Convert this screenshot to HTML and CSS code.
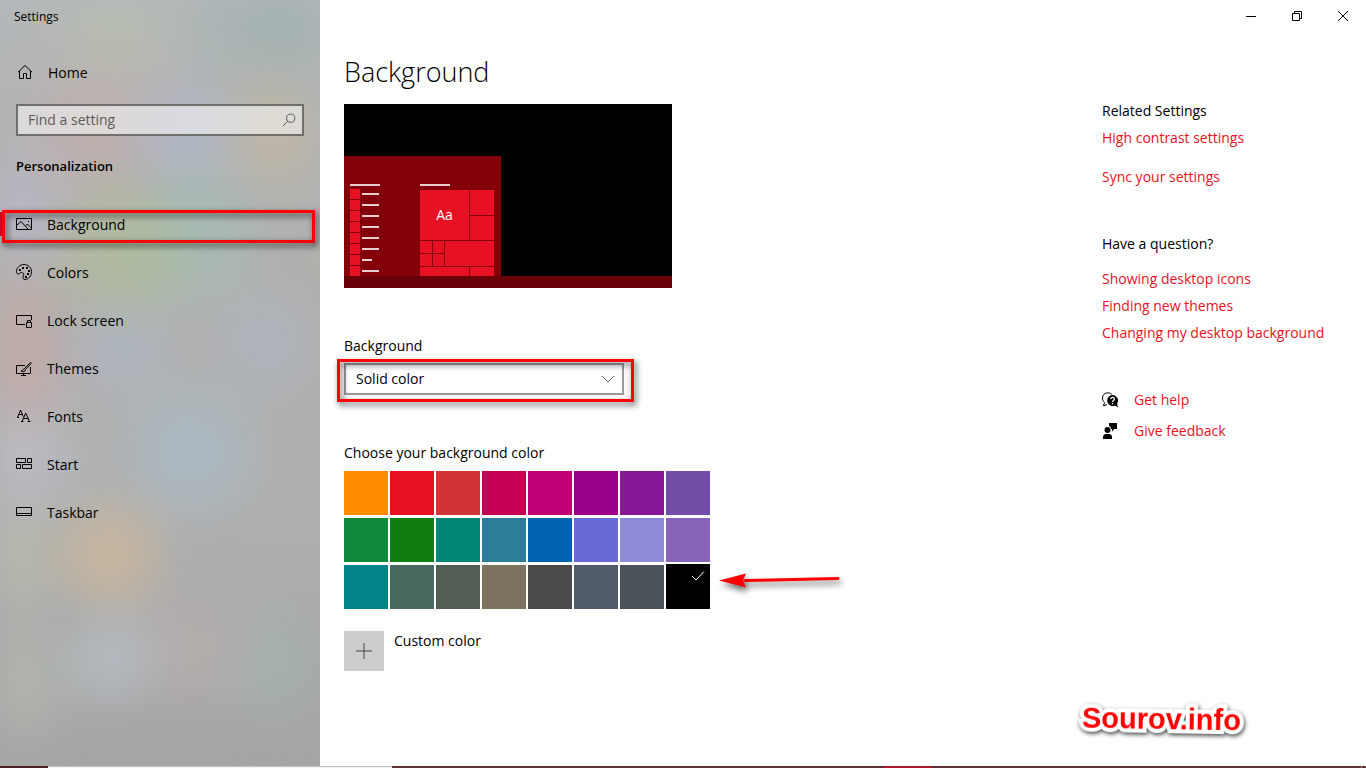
FILE: index.html
```html
<!DOCTYPE html>
<html lang="en">
<head>
    <meta charset="UTF-8">
    <meta name="viewport" content="width=device-width, initial-scale=1.0">
    <title>Settings</title>
    <link rel="stylesheet" href="styles.css">
</head>
<body>

    <div class="window">

        <!-- Sidebar -->
        <aside class="sidebar">
            <div class="app-name">Settings</div>

            <a class="nav-link home" href="#">
                <svg class="icon" viewBox="0 0 16 16"><path d="M1 8.2 8 1.5l7 6.7M2.5 7v7.5h4v-5h3v5h4V7"/></svg>
                <span>Home</span>
            </a>

            <div class="search">
                <input type="text" placeholder="Find a setting" aria-label="Find a setting">
                <svg class="search-icon" viewBox="0 0 14 14"><circle cx="8.7" cy="5.2" r="4.1"/><path d="M5.7 8.2 1 13"/></svg>
            </div>

            <h2 class="section-name">Personalization</h2>

            <nav class="nav">
                <a class="nav-link active" href="#">
                    <svg class="icon" viewBox="0 0 16 16"><path d="M.5 2.5h15v11H.5zM.5 9.5 5 5.5l7.5 8M9.5 10l2-2 4 4"/><path class="fill" d="M12 5h1v1h-1z"/></svg>
                    <span>Background</span>
                    <i class="callout"></i>
                </a>
                <a class="nav-link" href="#">
                    <svg class="icon" viewBox="0 0 16 16"><path d="M.5 7.5C.5 3.5 4 .5 8 .5s7.500 3 7.500 7c0 4.500-3 8-6.500 8-1.500 0-2-1-2-2.200 0-1.200.7-1.800.7-2.800s-1-2-2.200-2C4 8.500 3.500 10 2.200 10 1 10 .5 8.700.5 7.500z"/><path class="fill" d="M3 5h2v2H3zM6 3h2v2H6zM10 3h2v2h-2zM12 6h2v2h-2zM11 9h2v2h-2zM9 12h2v2H9z"/></svg>
                    <span>Colors</span>
                </a>
                <a class="nav-link" href="#">
                    <svg class="icon" viewBox="0 0 16 16"><path d="M9 12.500H.5v-9h15V8M10.500 10.500h5v5h-5zM11.500 10.500V8.500h3v2"/></svg>
                    <span>Lock screen</span>
                </a>
                <a class="nav-link" href="#">
                    <svg class="icon" viewBox="0 0 16 16"><path d="M9 5.500H.5v8h14V7M7.500 13.500v2M5 15.500h5M14.700 2.300 8.500 8.500l1 1 5.700-6.200zM8.500 8.700c-2 0-1.500 2-3.500 2.500 2 1 4.500.5 4.500-1.700"/></svg>
                    <span>Themes</span>
                </a>
                <a class="nav-link" href="#">
                    <svg class="icon" viewBox="0 0 16 16"><path d="M1.500 9.500 4.500 2l2.700 6.500M2.500 6.500h3.500M1 9.500h2M6 13.500 9.700 5l3.800 8.500M7.200 10.500h5M5 13.500h2.500M11.500 13.500h3"/></svg>
                    <span>Fonts</span>
                </a>
                <a class="nav-link" href="#">
                    <svg class="icon" viewBox="0 0 16 16"><path d="M.5 2.500h9v4h-9zM11.500 2.500h4v4h-4zM.5 8.500h4v4h-4zM6.500 8.500h9v4h-9z"/></svg>
                    <span>Start</span>
                </a>
                <a class="nav-link" href="#">
                    <svg class="icon" viewBox="0 0 16 16"><path d="M.5 3.500h15v8H.5zM.5 9.500h15"/></svg>
                    <span>Taskbar</span>
                </a>
            </nav>
        </aside>

        <!-- Main area -->
        <div class="main">
            <header class="titlebar">
                <button type="button" aria-label="Minimize"><svg viewBox="0 0 12 12"><path d="M1 6.500h10"/></svg></button>
                <button type="button" aria-label="Restore"><svg viewBox="0 0 12 12"><path d="M1.500 3.500h7v7h-7zM3.500 3.500v-2h7v7h-2"/></svg></button>
                <button type="button" aria-label="Close"><svg viewBox="0 0 12 12"><path d="M1 1l10 10M11 1 1 11"/></svg></button>
            </header>

            <div class="columns">
                <main class="content">
                    <h1>Background</h1>

                    <!-- Desktop preview -->
                    <div class="preview">
                        <div class="start-menu">
                            <ul class="app-list">
                                <li></li><li></li><li></li><li></li>
                                <li></li><li></li><li class="short"></li><li></li>
                            </ul>
                            <div class="tiles">
                                <div class="tile large">Aa</div>
                                <div class="tile medium"></div>
                                <div class="tile medium"></div>
                                <div class="small-tiles">
                                    <div class="tile"></div><div class="tile"></div>
                                    <div class="tile"></div><div class="tile"></div>
                                </div>
                                <div class="tile wide"></div>
                                <div class="tile bottom"></div>
                                <div class="tile"></div>
                            </div>
                        </div>
                        <div class="preview-taskbar"></div>
                    </div>

                    <label class="field-label" for="bgType">Background</label>
                    <div class="select-box">
                        <select id="bgType">
                            <option>Picture</option>
                            <option selected>Solid color</option>
                            <option>Slideshow</option>
                        </select>
                        <svg class="chevron" viewBox="0 0 14 8"><path d="M1 1l6 6 6-6"/></svg>
                        <i class="callout"></i>
                    </div>

                    <div class="field-label" id="colorLabel">Choose your background color</div>
                    <div class="swatches" role="radiogroup" aria-labelledby="colorLabel">
                        <input type="radio" name="color" class="orange" aria-label="Orange">
                        <input type="radio" name="color" class="red" aria-label="Red">
                        <input type="radio" name="color" class="brick" aria-label="Brick red">
                        <input type="radio" name="color" class="rose" aria-label="Rose">
                        <input type="radio" name="color" class="plum" aria-label="Plum">
                        <input type="radio" name="color" class="magenta" aria-label="Magenta">
                        <input type="radio" name="color" class="violet" aria-label="Violet">
                        <input type="radio" name="color" class="iris" aria-label="Iris">
                        <input type="radio" name="color" class="mint" aria-label="Mint green">
                        <input type="radio" name="color" class="green" aria-label="Green">
                        <input type="radio" name="color" class="sea" aria-label="Seafoam">
                        <input type="radio" name="color" class="steel" aria-label="Steel">
                        <input type="radio" name="color" class="blue" aria-label="Blue">
                        <input type="radio" name="color" class="purple" aria-label="Purple">
                        <input type="radio" name="color" class="lilac" aria-label="Lilac">
                        <input type="radio" name="color" class="orchid" aria-label="Orchid">
                        <input type="radio" name="color" class="teal" aria-label="Teal">
                        <input type="radio" name="color" class="moss" aria-label="Moss">
                        <input type="radio" name="color" class="sage" aria-label="Sage">
                        <input type="radio" name="color" class="camo" aria-label="Camouflage">
                        <input type="radio" name="color" class="storm" aria-label="Storm">
                        <input type="radio" name="color" class="slate" aria-label="Slate">
                        <input type="radio" name="color" class="dusk" aria-label="Dusk">
                        <input type="radio" name="color" class="black" aria-label="Black" checked>
                        <svg class="check" viewBox="0 0 14 12"><path d="M1 6l4 4 8-8.500"/></svg>
                        <svg class="arrow" viewBox="0 0 130 30"><path d="M26 15.500 119 13.500" stroke="#f00" stroke-width="3" stroke-linecap="round"/><path d="M0 15.500 27 8.500l-3 7 3 7z" fill="#f00"/></svg>
                    </div>

                    <div class="custom">
                        <button type="button" id="customColor" aria-label="Add custom color"><svg viewBox="0 0 16 16"><path d="M8 0v16M0 8h16"/></svg></button>
                        <label for="customColor">Custom color</label>
                    </div>
                </main>

                <!-- Related links -->
                <aside class="related">
                    <h3>Related Settings</h3>
                    <ul class="spaced">
                        <li><a href="#">High contrast settings</a></li>
                        <li><a href="#">Sync your settings</a></li>
                    </ul>

                    <h3>Have a question?</h3>
                    <ul class="questions">
                        <li><a href="#">Showing desktop icons</a></li>
                        <li><a href="#">Finding new themes</a></li>
                        <li><a href="#">Changing my desktop background</a></li>
                    </ul>

                    <ul class="support">
                        <li>
                            <svg viewBox="0 0 16 16"><path d="M5 12.500 1.500 14l1-3.500C.7 9 .5 7.500.5 6c0-3 2.300-5.200 5.200-5.200 2 0 3.500.8 4.500 2" fill="none" stroke="#000"/><path d="M10.500 3a5.500 5.500 0 1 0 2.600 10.400L16 15.500l-.9-4A5.500 5.500 0 0 0 10.500 3z"/><path d="M8.700 7c0-2.200 3.700-2.200 3.700 0 0 1.300-1.800 1.400-1.800 3M10.600 11v1.300" fill="none" stroke="#fff" stroke-width="1.200"/></svg>
                            <a href="#">Get help</a>
                        </li>
                        <li>
                            <svg viewBox="0 0 16 16"><circle cx="5.500" cy="7" r="3"/><path d="M1 16v-2c0-2 1.500-3 3-3h3c1.600 0 3 1 3 3v2zM7 0h8v6h-2.500L10 8.500V6H9C9 4.500 8.500 3.500 7 3z"/></svg>
                            <a href="#">Give feedback</a>
                        </li>
                    </ul>
                </aside>
            </div>
        </div>
    </div>

    <!-- Edge of the desktop taskbar -->
    <div class="taskbar">
        <span class="tb-start"></span>
        <span class="tb-search"></span>
        <span class="tb-apps"></span>
        <span class="tb-active"></span>
        <span class="tb-tray"></span>
    </div>

    <div class="watermark">Sourov.info</div>

</body>
</html>
```

FILE: styles.css
```css
/* General Reset */
* {
    box-sizing: border-box;
}

body {
    margin: 0;
    min-height: 100vh;
    display: flex;
    flex-direction: column;
    font-family: "Open Sans", "Noto Sans", sans-serif;
    font-size: 14px;
    line-height: 20px;
    color: #000;
    background: #fff;
    position: relative;
    overflow: hidden;
}

h1, h2, h3, ul {
    margin: 0;
    padding: 0;
    font-weight: 400;
    list-style: none;
}

a {
    text-decoration: none;
}

input, select, button {
    font: inherit;
    color: inherit;
}

svg {
    fill: none;
    stroke: #000;
    display: block;
}

.window {
    flex: 1;
    display: flex;
}

/* Sidebar */
.sidebar {
    position: relative;
    z-index: 0;
    width: 320px;
    flex-shrink: 0;
    overflow: hidden;
    background: linear-gradient(#b4b8ba, #b0b0ac 35%, #aeb0b0 65%, #a5a5a5);
}

/* Frosted desktop showing through the sidebar */
.sidebar::before {
    content: "";
    position: absolute;
    inset: 0;
    z-index: -1;
    filter: blur(14px);
    background:
        radial-gradient(circle at 110px 555px, rgba(208, 186, 155, 0.9), transparent 75px),
        radial-gradient(circle at 190px 450px, rgba(170, 190, 204, 0.8), transparent 85px),
        radial-gradient(circle at 112px 658px, rgba(184, 194, 202, 0.8), transparent 65px),
        radial-gradient(circle at 120px 250px, rgba(176, 192, 145, 0.7), transparent 90px),
        radial-gradient(circle at 190px 235px, rgba(160, 192, 184, 0.7), transparent 95px),
        radial-gradient(circle at 120px 345px, rgba(172, 184, 204, 0.6), transparent 80px),
        radial-gradient(circle at 265px 340px, rgba(172, 182, 200, 0.6), transparent 80px),
        radial-gradient(circle at 185px 135px, rgba(172, 184, 208, 0.7), transparent 75px),
        radial-gradient(circle at 270px 130px, rgba(200, 184, 160, 0.7), transparent 80px),
        radial-gradient(circle at 100px 130px, rgba(200, 172, 168, 0.6), transparent 110px),
        radial-gradient(circle at 115px 25px, rgba(184, 194, 174, 0.7), transparent 90px),
        radial-gradient(circle at 0 350px, rgba(198, 168, 164, 0.9), transparent 110px),
        radial-gradient(circle at 10px 450px, rgba(192, 192, 202, 0.9), transparent 90px),
        radial-gradient(circle at 0 555px, rgba(188, 188, 172, 0.9), transparent 80px),
        radial-gradient(circle at 10px 680px, rgba(178, 186, 172, 0.8), transparent 90px),
        radial-gradient(circle at 190px 650px, rgba(186, 174, 170, 0.7), transparent 80px),
        radial-gradient(circle at 270px 665px, rgba(162, 178, 176, 0.8), transparent 80px),
        radial-gradient(circle at 10px 210px, rgba(182, 184, 202, 0.9), transparent 100px),
        radial-gradient(circle at 280px 20px, rgba(160, 176, 174, 0.9), transparent 120px);
}

.app-name {
    padding: 7px 14px 22px;
    font-size: 12px;
}

.nav-link {
    position: relative;
    display: flex;
    align-items: center;
    gap: 15px;
    height: 48px;
    padding: 0 16px;
    color: #000;
}

.nav-link.home {
    padding: 0 17px;
}

.icon {
    width: 16px;
    height: 16px;
    margin-bottom: 2px;
    flex-shrink: 0;
}

.icon .fill {
    fill: #000;
    stroke: none;
}

.search {
    position: relative;
    margin: 7px 16px 0;
}

.search input {
    display: block;
    width: 100%;
    height: 32px;
    padding: 0 36px 2px 10px;
    border: 2px solid #71706d;
    border-radius: 0;
    background: rgba(255, 255, 255, 0.5);
    outline: none;
}

.search input::placeholder {
    color: #5b5b5b;
    opacity: 1;
}

.search-icon {
    position: absolute;
    right: 8px;
    top: 9px;
    width: 14px;
    height: 14px;
    stroke: #5b5b5b;
}

.section-name {
    padding: 20px 16px 25px;
    font-size: 13px;
    font-weight: 600;
}

.nav-link.active::before {
    content: "";
    position: absolute;
    left: 0;
    top: 11px;
    width: 4px;
    height: 24px;
    background: #d81020;
}

/* Red marker boxes */
.callout {
    position: absolute;
    border: 3px solid #f00;
    filter: drop-shadow(2px 3px 3px rgba(0, 0, 0, 0.7));
    pointer-events: none;
}

.nav-link .callout {
    left: 2px;
    right: 5px;
    top: 9px;
    height: 33px;
}

.select-box .callout {
    left: -7px;
    right: -10px;
    top: -4px;
    bottom: -7px;
}

/* Main area */
.main {
    flex: 1;
    display: flex;
    flex-direction: column;
}

.titlebar {
    display: flex;
    justify-content: flex-end;
    height: 32px;
}

.titlebar button {
    width: 46px;
    padding: 0;
    border: none;
    background: none;
    display: flex;
    align-items: center;
    justify-content: center;
}

.titlebar svg {
    width: 12px;
    height: 12px;
}

.columns {
    display: flex;
    justify-content: space-between;
    padding-left: 24px;
}

h1 {
    margin: 20px 0 12px;
    font-size: 27px;
    font-weight: 300;
    line-height: 40px;
}

/* Desktop preview */
.preview {
    width: 328px;
    height: 184px;
    display: flex;
    flex-direction: column;
    justify-content: flex-end;
    background: #000;
}

.start-menu {
    display: flex;
    justify-content: space-between;
    width: 157px;
    height: 120px;
    padding: 28px 7px 0 6px;
    background: #83000b;
}

.preview-taskbar {
    height: 12px;
    background: #670008;
}

.app-list::before, .tiles::before {
    content: "";
    display: block;
    width: 30px;
    height: 2px;
    background: #e9ccce;
}

.app-list::before {
    margin-bottom: 3px;
}

.app-list li {
    display: flex;
    align-items: center;
    gap: 2px;
    height: 10px;
    margin-bottom: 1px;
}

.app-list li::before {
    content: "";
    width: 10px;
    height: 10px;
    background: #e81123;
}

.app-list li::after {
    content: "";
    width: 17px;
    height: 2px;
    background: #e9ccce;
}

.app-list .short::after {
    width: 10px;
}

.tiles {
    display: grid;
    grid-template-columns: 24px 24px 24px;
    grid-template-rows: 5px 25px 24px 25px 9px;
    gap: 1px;
    width: 74px;
}

.tiles::before {
    grid-column: 1 / -1;
}

.tile {
    background: #e81123;
}

.tile.large {
    grid-column: 1 / 3;
    grid-row: 2 / 4;
    display: flex;
    align-items: center;
    justify-content: center;
    color: #fff;
}

.tile.wide {
    grid-column: 2 / 4;
}

.tile.bottom {
    grid-column: 1 / 3;
}

.small-tiles {
    display: grid;
    grid-template-columns: 1fr 1fr;
    gap: 1px;
}

/* Form fields */
.field-label {
    display: block;
    margin-top: 48px;
}

.select-box {
    position: relative;
    width: 280px;
    margin-top: 7px;
}

.select-box select {
    display: block;
    width: 100%;
    height: 32px;
    padding: 0 10px;
    border: 2px solid #999;
    border-radius: 0;
    background: #fff;
    appearance: none;
}

.chevron {
    position: absolute;
    right: 9px;
    top: 12px;
    width: 14px;
    height: 8px;
    stroke: #666;
    pointer-events: none;
}

/* Color grid */
.swatches {
    position: relative;
    display: grid;
    grid-template-columns: repeat(8, 44px);
    gap: 3px 2px;
    width: 366px;
    margin-top: 8px;
}

.swatches input {
    appearance: none;
    width: 44px;
    height: 44px;
    margin: 0;
}

.orange { background: #ff8c00; }
.red { background: #e81123; }
.brick { background: #d13438; }
.rose { background: #c30052; }
.plum { background: #bf0077; }
.magenta { background: #9a0089; }
.violet { background: #881798; }
.iris { background: #744da9; }
.mint { background: #10893e; }
.green { background: #107c10; }
.sea { background: #018574; }
.steel { background: #2d7d9a; }
.blue { background: #0063b1; }
.purple { background: #6b69d6; }
.lilac { background: #8e8cd8; }
.orchid { background: #8764b8; }
.teal { background: #038387; }
.moss { background: #486860; }
.sage { background: #525e54; }
.camo { background: #7e735f; }
.storm { background: #4c4a48; }
.slate { background: #515c6b; }
.dusk { background: #4a5459; }
.black { background: #000; box-shadow: 0 -1px 0 #000; }

.check {
    position: absolute;
    right: 5px;
    bottom: 27px;
    width: 14px;
    height: 12px;
    stroke: #fff;
}

.arrow {
    position: absolute;
    left: 375px;
    bottom: 14px;
    width: 130px;
    height: 30px;
    stroke: none;
    filter: drop-shadow(2px 4px 3px rgba(0, 0, 0, 0.6));
}

.custom {
    display: flex;
    gap: 10px;
    margin-top: 22px;
}

.custom button {
    width: 40px;
    height: 40px;
    padding: 12px;
    border: none;
    background: #ccc;
}

.custom svg {
    width: 16px;
    height: 16px;
    stroke: #444;
}

/* Related links */
.related {
    width: 264px;
    padding-top: 69px;
}

.related h3 {
    font-size: 14px;
}

.related a {
    color: #e81123;
}

.spaced {
    display: grid;
    gap: 19px;
    margin: 7px 0 47px;
}

.questions {
    display: grid;
    gap: 7px;
    margin: 15px 0 47px;
}

.support {
    display: grid;
    gap: 11px;
}

.support li {
    display: flex;
    align-items: center;
    gap: 16px;
}

.support svg {
    width: 16px;
    height: 16px;
    fill: #000;
    stroke: none;
}

/* Taskbar edge */
.taskbar {
    display: flex;
    height: 2px;
    background: #5c3034;
}

.tb-start {
    width: 48px;
    background: #4c1f24;
}

.tb-search {
    width: 344px;
    border-top: 1px solid #c4c4c4;
    background: #f2f2f2;
}

.tb-apps {
    width: 491px;
}

.tb-active {
    width: 48px;
    background: #a81a28;
}

.tb-tray {
    flex: 1;
    margin-right: 4px;
    border-right: 1px solid #a08888;
}

.watermark {
    position: absolute;
    right: 125px;
    bottom: 32px;
    font: bold 29px/34px "Liberation Sans", Arial, sans-serif;
    color: #f00;
    -webkit-text-stroke: 8px #fff;
    paint-order: stroke fill;
    stroke-linejoin: round;
    transform: rotate(1deg);
    filter: drop-shadow(1px 2px 2px rgba(0, 0, 0, 0.7));
}
```
